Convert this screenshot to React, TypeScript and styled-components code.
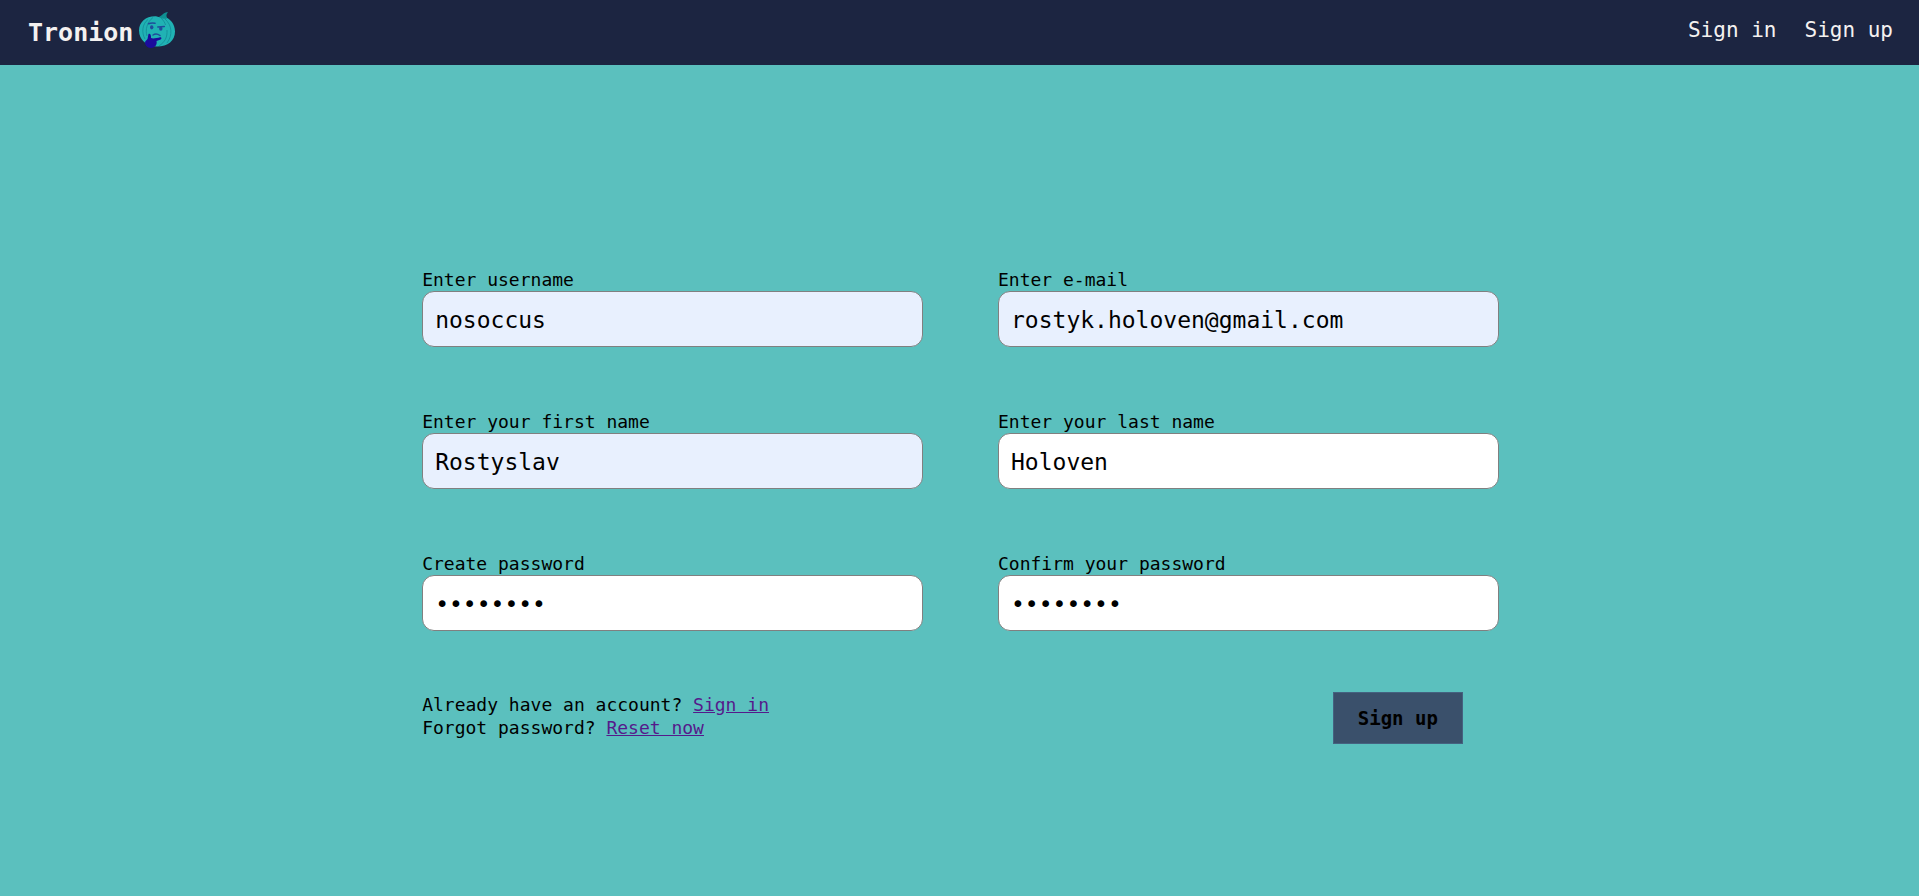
import React from "react";
import styled, { createGlobalStyle } from "styled-components";

const GlobalStyle = createGlobalStyle`
  *, *::before, *::after { box-sizing: border-box; }
  body {
    margin: 0;
    background: #5bc0be;
    color: #000;
    font: 18px/23px Consolas, "DejaVu Sans Mono", "Liberation Mono", monospace;
  }
`;

const Header = styled.header`
  display: flex;
  align-items: center;
  justify-content: space-between;
  height: 65px;
  padding: 0 26px 0 28px;
  background: #1c2541;
`;

const Brand = styled.a`
  display: flex;
  align-items: center;
  gap: 6px;
  color: #f4f1f0;
  font-size: 25px;
  line-height: 32px;
  font-weight: bold;
  text-decoration: none;
`;

const Logo = styled.svg`
  width: 36px;
  height: 36px;
  margin-bottom: 6px;
`;

const Nav = styled.nav`
  display: flex;
  gap: 28px;
  padding-bottom: 6px;
`;

const NavLink = styled.a`
  color: #f4f1f0;
  font-size: 21px;
  line-height: 28px;
  text-decoration: none;
`;

const Form = styled.form`
  display: grid;
  gap: 61px;
  padding: 203px calc(22% - 2px) 64px 22%;
`;

const Columns = styled.div`
  display: grid;
  grid-template-columns: 1fr 1fr;
  column-gap: 75px;
  row-gap: 63px;
`;

const Field = styled.div`
  display: flex;
  flex-direction: column;
`;

const Input = styled.input<{ $filled?: boolean }>`
  width: 100%;
  height: 56px;
  padding: 2px 12px 0;
  border: 1px solid #808080;
  border-radius: 12px;
  background: ${(p) => (p.$filled ? "#e8f0fe" : "#fff")};
  color: #000;
  font-family: inherit;
  font-size: 23px;
  outline: none;
`;

const Hints = styled.div`
  padding-top: 1px;
  white-space: nowrap;
`;

const Hint = styled.p`
  margin: 0;
`;

const HintLink = styled.a`
  color: #551a8b;
  text-decoration: underline;
`;

const Actions = styled.div`
  display: flex;
  justify-content: flex-end;
  align-items: flex-start;
  padding-right: 36px;
`;

const SubmitButton = styled.button`
  height: 52px;
  padding: 0 24px;
  border: 1px solid #456280;
  background: #3a506b;
  color: #000;
  font-family: inherit;
  font-size: 19px;
  font-weight: bold;
`;

const fields = [
  { id: "username", label: "Enter username", type: "text", value: "nosoccus", filled: true },
  { id: "email", label: "Enter e-mail", type: "email", value: "rostyk.holoven@gmail.com", filled: true },
  { id: "first-name", label: "Enter your first name", type: "text", value: "Rostyslav", filled: true },
  { id: "last-name", label: "Enter your last name", type: "text", value: "Holoven", filled: false },
  { id: "password", label: "Create password", type: "password", value: "password", filled: false },
  { id: "confirm", label: "Confirm your password", type: "password", value: "password", filled: false },
];

const OnionLogo = () => (
  <Logo viewBox="0 0 36 36" aria-hidden="true">
    <path d="M17 6.500C20 5 22 4 23.500 2.500C25 .8 27 .3 29 .3C27 2.500 27 4 28.500 7L24 9Z" fill="#0e8f91" />
    <path d="M17 4.200C7 3.800 0 10 0 18.500C0 28 8 34.500 18 34.500C29 34.500 36 28.500 36 19.500C36 12 31 6.500 26.500 5.500C23 7.500 20 4.500 17 4.200Z" fill="#20b2b4" />
    <path d="M20 5.500C22 5 23.500 3.500 24.500 2.200L27 2.500C26.500 4 27 5.500 28 6.800C25 6.800 23 6.500 20 5.500Z" fill="#0e8f91" />
    <g fill="none" stroke="#148f99" strokeWidth=".9">
      <path d="M9 7.500C3 12 2.500 21 6 27" />
      <path d="M14 5.500C8 10 6 18 8 24" />
      <path d="M22 6C25 9 26 11 26.500 13" />
      <path d="M26 7C33 13 34 23 28 31" />
      <path d="M28 18C28.500 25 26 30 20 34" />
    </g>
    <g fill="none" stroke="#1f4d9b" strokeWidth="1.500" strokeLinecap="round">
      <path d="M9.500 11.800C12 10.800 14 11 16 11.300" />
      <path d="M18.800 15L25.300 14.500" />
      <path d="M14 23C16 21.500 19 22 21 23.500" />
    </g>
    <ellipse cx="12.700" cy="15.300" rx="1.700" ry="2.100" fill="#1f4d9b" />
    <ellipse cx="21.800" cy="16.800" rx="1.700" ry="2" fill="#1f4d9b" />
    <path d="M9.500 22C11.200 21 12.200 23 12 26C14 27 18 26 21 25.200C23 25 22.800 27.300 21 27.800L17.500 29C18.500 33 15.500 36 12 36C8 36 5.500 33 6.200 29.500L8.500 27Z" fill="#1b0b9c" />
  </Logo>
);

export default function App() {
  return (
    <>
      <GlobalStyle />
      <Header>
        <Brand href="#home">
          Tronion
          <OnionLogo />
        </Brand>
        <Nav>
          <NavLink href="#sign-in">Sign in</NavLink>
          <NavLink href="#sign-up">Sign up</NavLink>
        </Nav>
      </Header>
      <main>
        <Form onSubmit={(e) => e.preventDefault()}>
          <Columns>
            {fields.map((f) => (
              <Field key={f.id}>
                <label htmlFor={f.id}>{f.label}</label>
                <Input id={f.id} type={f.type} defaultValue={f.value} $filled={f.filled} spellCheck={false} />
              </Field>
            ))}
          </Columns>
          <Columns>
            <Hints>
              <Hint>
                Already have an account? <HintLink href="#sign-in">Sign in</HintLink>
              </Hint>
              <Hint>
                Forgot password? <HintLink href="#reset">Reset now</HintLink>
              </Hint>
            </Hints>
            <Actions>
              <SubmitButton type="submit">Sign up</SubmitButton>
            </Actions>
          </Columns>
        </Form>
      </main>
    </>
  );
}
